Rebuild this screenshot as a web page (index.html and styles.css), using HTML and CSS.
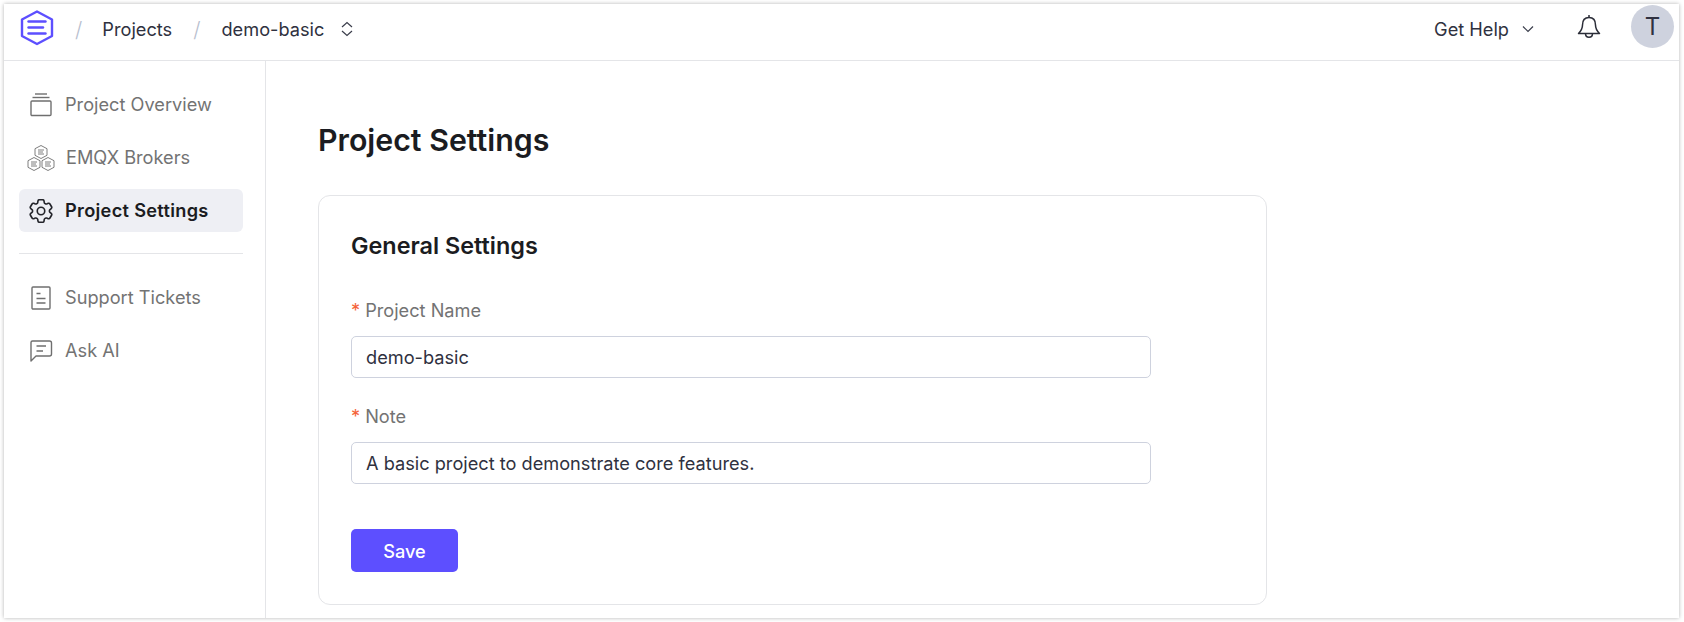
FILE: index.html
```html
<!DOCTYPE html>
<html>
<head>
<meta charset="UTF-8">
<title>Project Settings</title>
<link rel="stylesheet" href="styles.css">
</head>
<body>
	<div class="app">
		<header class="topbar">
			<svg class="logo" width="34" height="37" viewBox="0 0 34 37" fill="none" stroke="#5d4fff" stroke-width="2.4" stroke-linejoin="round" stroke-linecap="round">
				<path d="M17 2.5 L32 10.5 V27 L17 35 L2 27 V10.5 Z"/>
				<path d="M8.5 12.5 H25.5"/>
				<path d="M8.5 18.5 H23"/>
				<path d="M8.5 24.5 H25.5"/>
			</svg>
			<span class="slash slash-first">/</span>
			<span class="crumb">Projects</span>
			<span class="slash">/</span>
			<span class="crumb">demo-basic</span>
			<svg class="updown" width="14" height="16" viewBox="0 0 14 16" fill="none" stroke="#3a3d4b" stroke-width="1.2">
				<path d="M2 6 L7 1.5 L12 6"/>
				<path d="M2 10 L7 14.5 L12 10"/>
			</svg>
			<div class="topbar-right">
				<span class="crumb">Get Help</span>
				<svg class="chevron" width="12" height="8" viewBox="0 0 12 8" fill="none" stroke="#3a3d4b" stroke-width="1.2">
					<path d="M1 1.5 L6 6.5 L11 1.5"/>
				</svg>
				<svg class="bell" width="24" height="26" viewBox="0 0 24 26" fill="none" stroke="#2b2d38" stroke-width="1.5" stroke-linejoin="round">
					<path d="M12 1 V3.5"/>
					<path d="M12 3.5 C7.5 3.5 5.5 7 5.5 11 C5.5 15 4 17 1.5 19.5 H22.5 C20 17 18.5 15 18.5 11 C18.5 7 16.5 3.5 12 3.5 Z"/>
					<path d="M8.5 19.5 C8.5 24.5 15.5 24.5 15.5 19.5"/>
				</svg>
				<div class="avatar">T</div>
			</div>
		</header>
		<div class="layout">
			<nav class="sidebar">
				<a class="nav-item">
					<svg class="nav-icon" width="24" height="24" viewBox="0 0 24 24" fill="none" stroke="#6f6f6f" stroke-width="1.4">
						<path d="M6 1 H18"/>
						<path d="M3.5 4.5 H20.5"/>
						<rect x="2" y="8" width="20" height="14.5" rx="1"/>
					</svg>
					<span>Project Overview</span>
				</a>
				<a class="nav-item">
					<svg class="nav-icon icon-wide" width="28" height="26" viewBox="0 0 28 26" fill="none" stroke="#6f6f6f" stroke-width="0.9">
						<path d="M14 .5 L20 3.7 V10.3 L14 13.5 L8 10.3 V3.7 Z"/>
						<path d="M11 5 H17 M11 7 H16 M11 9 H17"/>
						<path d="M7 12.5 L13 15.7 V22.3 L7 25.5 L1 22.3 V15.7 Z"/>
						<path d="M4 17 H10 M4 19 H9 M4 21 H10"/>
						<path d="M21 12.5 L27 15.7 V22.3 L21 25.5 L15 22.3 V15.7 Z"/>
						<path d="M18 17 H24 M18 19 H23 M18 21 H24"/>
					</svg>
					<span>EMQX Brokers</span>
				</a>
				<a class="nav-item active">
					<svg class="nav-icon" width="24" height="24" viewBox="2.4 2.4 19.2 19.2" fill="none" stroke="#24252b" stroke-width="1.3" stroke-linejoin="round" stroke-linecap="round">
						<path d="M9.594 3.94c.09-.542.56-.94 1.11-.94h2.593c.55 0 1.02.398 1.11.94l.213 1.281c.063.374.313.686.645.87.074.04.147.083.22.127.324.196.72.257 1.075.124l1.217-.456a1.125 1.125 0 011.37.49l1.296 2.247a1.125 1.125 0 01-.26 1.431l-1.003.827c-.293.24-.438.613-.431.992a6.759 6.759 0 010 .255c-.007.378.138.75.43.99l1.005.828c.424.35.534.954.26 1.43l-1.298 2.247a1.125 1.125 0 01-1.369.491l-1.217-.456c-.355-.133-.75-.072-1.076.124a6.57 6.57 0 01-.22.128c-.331.183-.581.495-.644.869l-.213 1.28c-.09.543-.56.941-1.11.941h-2.594c-.55 0-1.02-.398-1.11-.94l-.213-1.281c-.062-.374-.312-.686-.644-.87a6.52 6.52 0 01-.22-.127c-.325-.196-.72-.257-1.076-.124l-1.217.456a1.125 1.125 0 01-1.369-.49l-1.297-2.247a1.125 1.125 0 01.26-1.431l1.004-.827c.292-.24.437-.613.43-.992a6.932 6.932 0 010-.255c.007-.378-.138-.75-.43-.99l-1.004-.828a1.125 1.125 0 01-.26-1.43l1.297-2.247a1.125 1.125 0 011.37-.491l1.216.456c.356.133.751.072 1.076-.124.072-.044.146-.087.22-.128.332-.183.582-.495.644-.869l.214-1.281z"/>
						<circle cx="12" cy="12" r="3"/>
					</svg>
					<span>Project Settings</span>
				</a>
				<div class="nav-divider"></div>
				<a class="nav-item">
					<svg class="nav-icon" width="24" height="24" viewBox="0 0 24 24" fill="none" stroke="#6f6f6f" stroke-width="1.4">
						<rect x="3" y="1" width="18" height="22" rx="1"/>
						<path d="M7.5 7.5 H11.5 M7.5 12.5 H16.5 M7.5 17 H16.5"/>
					</svg>
					<span>Support Tickets</span>
				</a>
				<a class="nav-item">
					<svg class="nav-icon" width="24" height="24" viewBox="0 0 24 24" fill="none" stroke="#6f6f6f" stroke-width="1.4" stroke-linejoin="round">
						<path d="M3.5 2 H20.5 Q22.5 2 22.5 4 V15 Q22.5 17 20.5 17 H7 L2 22 V3.5 Q2 2 3.5 2 Z"/>
						<path d="M7.5 7 H17 M7.5 12 H14"/>
					</svg>
					<span>Ask AI</span>
				</a>
			</nav>
			<main class="content">
				<h1 class="page-title">Project Settings</h1>
				<section class="card">
					<h2 class="card-title">General Settings</h2>
					<form class="card-form" action="#">
						<label class="field-label" for="name"><span class="req">*</span>Project Name</label>
						<input class="field-input" type="text" id="name" value="demo-basic">
						<label class="field-label" for="note"><span class="req">*</span>Note</label>
						<input class="field-input" type="text" id="note" value="A basic project to demonstrate core features.">
						<button class="save-btn" type="button">Save</button>
					</form>
				</section>
			</main>
		</div>
	</div>
</body>
</html>
```

FILE: styles.css
```css
* {
	box-sizing: border-box;
}

html, body {
	height: 100%;
}

body {
	margin: 0;
	padding: 4px;
	background: #fff;
	overflow: hidden;
	font-family: Inter, "Liberation Sans", sans-serif;
	font-size: 18.2px;
}

.app {
	width: 1675px;
	height: 614px;
	background: #fff;
	box-shadow: 0 0 4px rgba(0, 0, 0, 0.3);
	overflow: hidden;
}

.topbar {
	display: flex;
	align-items: center;
	height: 57px;
	padding: 0 5px 6px 16px;
	border-bottom: 1px solid #e4e5e8;
	color: #2f3140;
}

.logo {
	flex: none;
	margin-bottom: 3px;
}

.slash {
	margin: 0 21px;
	color: #b9bfcf;
	font-size: 21px;
	font-weight: 300;
}

.slash-first {
	margin-right: 20px;
}

.crumb {
	font-size: 18.2px;
}

.updown {
	margin-left: 16px;
}

.topbar-right {
	display: flex;
	align-items: center;
	margin-left: auto;
}

.chevron {
	margin-left: 13px;
}

.bell {
	margin-left: 43px;
	margin-bottom: 4px;
}

.avatar {
	display: flex;
	align-items: center;
	justify-content: center;
	width: 43px;
	height: 43px;
	margin-left: 30px;
	margin-bottom: 5px;
	border-radius: 50%;
	background: #ced2de;
	font-size: 24px;
}

.layout {
	display: flex;
	height: 557px;
}

.sidebar {
	flex: none;
	display: flex;
	flex-direction: column;
	gap: 10px;
	width: 262px;
	padding: 22px 22px 0 15px;
	border-right: 1px solid #e4e5e8;
}

.nav-item {
	display: flex;
	align-items: center;
	height: 43px;
	padding-left: 10px;
	border-radius: 6px;
	color: #737373;
}

.nav-item span {
	margin-left: 12px;
	padding-bottom: 2px;
}

.nav-icon {
	flex: none;
}

.icon-wide {
	margin-left: -2px;
	margin-right: -1px;
}

.nav-item.active {
	background: #eeeff4;
	color: #1b1c21;
	font-weight: 600;
	letter-spacing: 0.3px;
}

.nav-divider {
	height: 1px;
	margin: 11px 0 12px;
	background: #e4e5e8;
}

.content {
	flex: 1;
	padding: 0 0 0 52px;
}

.page-title {
	margin: 59px 0 0;
	color: #1b1c21;
	font-size: 30.3px;
	font-weight: 600;
	line-height: 40px;
}

.card {
	width: 949px;
	height: 410px;
	margin-top: 35px;
	padding: 32px;
	border: 1px solid #e4e5e8;
	border-radius: 12px;
}

.card-title {
	margin: 0;
	color: #1b1c21;
	font-size: 23.4px;
	font-weight: 600;
	line-height: 36px;
}

.card-form {
	padding-top: 9px;
}

.field-label {
	display: block;
	height: 24px;
	margin: 25px 0 14px;
	color: #737373;
	font-size: 18.2px;
	line-height: 24px;
}

.field-input + .field-label {
	margin-top: 26px;
}

.req {
	margin-right: 5px;
	color: #f5633a;
}

.field-input {
	display: block;
	width: 800px;
	height: 42px;
	padding: 0 14px;
	border: 1px solid #ced2de;
	border-radius: 5px;
	color: #2f3140;
	font-family: inherit;
	font-size: 18.2px;
}

.save-btn {
	display: block;
	width: 107px;
	height: 43px;
	margin-top: 45px;
	border: 0;
	border-radius: 5px;
	background: #5d4fff;
	color: #fff;
	font-family: inherit;
	font-size: 18.2px;
	font-weight: 500;
}
```
